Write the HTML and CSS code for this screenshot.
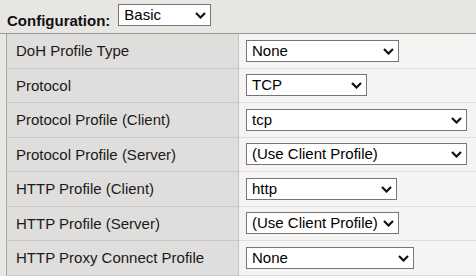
FILE: index.html
```html
<!DOCTYPE html>
<html lang="en">
<head>
  <meta charset="UTF-8">
  <title>Configuration</title>
  <link rel="stylesheet" href="styles.css">
</head>
<body>

  <!-- Top bar -->
  <div class="config-bar">
    <span class="config-label">Configuration:</span>
    <span class="pick pick-basic">
      <select><option>Basic</option><option>Advanced</option></select>
      <svg class="chev" viewBox="0 0 11 7"><path d="M1 1 L5.5 5.5 L10 1" /></svg>
    </span>
  </div>

  <!-- Settings -->
  <table class="settings">
    <tr>
      <td class="name">DoH Profile Type</td>
      <td class="value">
        <span class="pick w-153">
          <select><option>None</option></select>
          <svg class="chev" viewBox="0 0 11 7"><path d="M1 1 L5.5 5.5 L10 1" /></svg>
        </span>
      </td>
    </tr>
    <tr>
      <td class="name">Protocol</td>
      <td class="value">
        <span class="pick w-121">
          <select><option>TCP</option><option>UDP</option></select>
          <svg class="chev" viewBox="0 0 11 7"><path d="M1 1 L5.5 5.5 L10 1" /></svg>
        </span>
      </td>
    </tr>
    <tr>
      <td class="name">Protocol Profile (Client)</td>
      <td class="value">
        <span class="pick w-221">
          <select><option>tcp</option></select>
          <svg class="chev" viewBox="0 0 11 7"><path d="M1 1 L5.5 5.5 L10 1" /></svg>
        </span>
      </td>
    </tr>
    <tr>
      <td class="name">Protocol Profile (Server)</td>
      <td class="value">
        <span class="pick w-221">
          <select><option>(Use Client Profile)</option></select>
          <svg class="chev" viewBox="0 0 11 7"><path d="M1 1 L5.5 5.5 L10 1" /></svg>
        </span>
      </td>
    </tr>
    <tr>
      <td class="name">HTTP Profile (Client)</td>
      <td class="value">
        <span class="pick w-151">
          <select><option>http</option></select>
          <svg class="chev" viewBox="0 0 11 7"><path d="M1 1 L5.5 5.5 L10 1" /></svg>
        </span>
      </td>
    </tr>
    <tr>
      <td class="name">HTTP Profile (Server)</td>
      <td class="value">
        <span class="pick w-153">
          <select><option>(Use Client Profile)</option></select>
          <svg class="chev" viewBox="0 0 11 7"><path d="M1 1 L5.5 5.5 L10 1" /></svg>
        </span>
      </td>
    </tr>
    <tr>
      <td class="name">HTTP Proxy Connect Profile</td>
      <td class="value">
        <span class="pick w-168">
          <select><option>None</option></select>
          <svg class="chev" viewBox="0 0 11 7"><path d="M1 1 L5.5 5.5 L10 1" /></svg>
        </span>
      </td>
    </tr>
  </table>

</body>
</html>
```

FILE: styles.css
```css
html, body {
  margin: 0;
  padding: 0;
  height: 100%;
  overflow: hidden;
  font-family: "Liberation Sans", Arial, sans-serif;
  font-size: 15px;
  color: #111;
  background: #e9e7e4;
}

/* Top bar */
.config-bar {
  display: flex;
  align-items: flex-start;
  height: 33px;
  padding-left: 7px;
  background: #e8e6e3;
  border-bottom: 1px solid #9a9896;
}

.config-label {
  font-weight: bold;
  margin-top: 12px;
  margin-right: 8px;
}

.pick-basic {
  width: 93px;
  margin-top: 4px;
}

/* Select look */
.pick {
  position: relative;
  display: inline-block;
  height: 22px;
  vertical-align: middle;
}

.pick select {
  appearance: none;
  -webkit-appearance: none;
  width: 100%;
  height: 100%;
  margin: 0;
  padding: 0 0 0 5px;
  border: 1px solid #767676;
  border-radius: 0;
  background: white;
  font-family: "Liberation Sans", Arial, sans-serif;
  font-size: 15px;
  color: #000;
  line-height: 20px;
}

.pick .chev {
  position: absolute;
  right: 5px;
  top: 8px;
  width: 11px;
  height: 7px;
  pointer-events: none;
}

.chev path {
  fill: none;
  stroke: #111;
  stroke-width: 2.2;
}

.w-121 { width: 121px; }
.w-151 { width: 151px; }
.w-153 { width: 153px; }
.w-168 { width: 168px; }
.w-221 { width: 221px; }

/* Settings table */
.settings {
  margin-left: 6px;
  width: calc(100% - 6px);
  border-collapse: collapse;
  border-left: 1px solid #a8a6a4;
}

.settings td {
  height: 33.5px;
  padding: 0;
  border-bottom: 1px solid #c9c8c6;
}

.name {
  width: 222px;
  padding-left: 9px !important;
  background: #dfdedc;
  color: #1a1a1a;
  border-right: 1px solid #c2c1bf;
}

.value {
  padding-left: 7px !important;
  background: #f5f4f2;
  border-bottom-color: #dddcda !important;
}
```
